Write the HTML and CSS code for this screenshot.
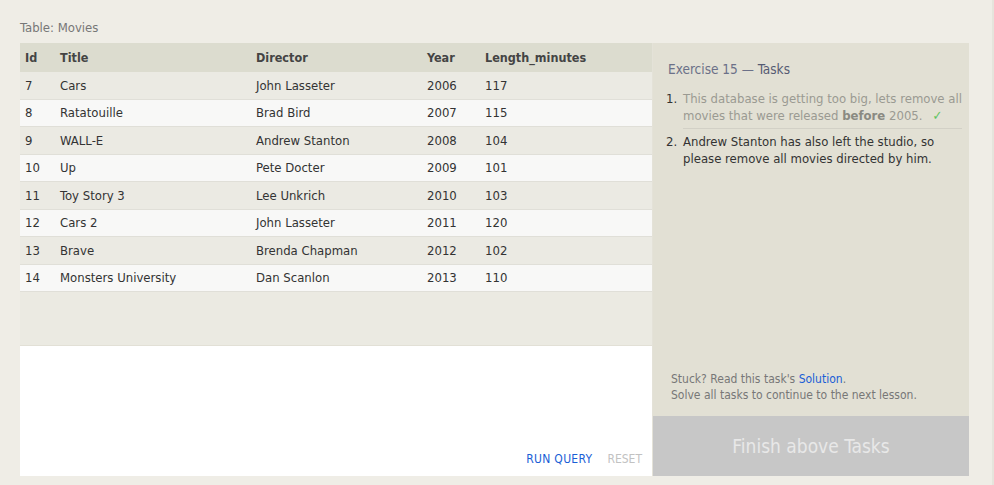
FILE: index.html
```html
<!DOCTYPE html>
<html>
<head>
<meta charset="utf-8">
<link rel="stylesheet" href="styles.css">
</head>
<body>
<div class="page">
  <div class="caption">Table: Movies</div>
  <div class="exercise">
    <div class="left">
      <div class="table-area">
        <table class="movies">
          <thead>
            <tr><th class="c-id">Id</th><th class="c-title">Title</th><th class="c-dir">Director</th><th class="c-year">Year</th><th>Length_minutes</th></tr>
          </thead>
          <tbody>
            <tr><td>7</td><td>Cars</td><td>John Lasseter</td><td>2006</td><td>117</td></tr>
            <tr><td>8</td><td>Ratatouille</td><td>Brad Bird</td><td>2007</td><td>115</td></tr>
            <tr><td>9</td><td>WALL-E</td><td>Andrew Stanton</td><td>2008</td><td>104</td></tr>
            <tr><td>10</td><td>Up</td><td>Pete Docter</td><td>2009</td><td>101</td></tr>
            <tr><td>11</td><td>Toy Story 3</td><td>Lee Unkrich</td><td>2010</td><td>103</td></tr>
            <tr><td>12</td><td>Cars 2</td><td>John Lasseter</td><td>2011</td><td>120</td></tr>
            <tr><td>13</td><td>Brave</td><td>Brenda Chapman</td><td>2012</td><td>102</td></tr>
            <tr><td>14</td><td>Monsters University</td><td>Dan Scanlon</td><td>2013</td><td>110</td></tr>
          </tbody>
        </table>
      </div>
      <div class="editor">
        <div class="actions">
          <span class="run">RUN QUERY</span>
          <span class="reset">RESET</span>
        </div>
      </div>
    </div>
    <div class="right">
      <div class="tasks">
        <h3 class="tasks-title">Exercise 15 — <span class="strong">Tasks</span></h3>
        <ol class="task-list">
          <li class="done"><span class="num">1.</span><span class="txt">This database is getting too big, lets remove all movies that were released <b>before</b> 2005.<span class="check">✓</span></span></li>
          <li><span class="num">2.</span><span class="txt">Andrew Stanton has also left the studio, so please remove all movies directed by him.</span></li>
        </ol>
        <div class="hint">
          <div>Stuck? Read this task's <span class="link">Solution</span>.</div>
          <div>Solve all tasks to continue to the next lesson.</div>
        </div>
      </div>
      <div class="finish">Finish above Tasks</div>
    </div>
  </div>
</div>
</body>
</html>
```

FILE: styles.css
```css
html, body {
  margin: 0;
  padding: 0;
}
body {
  background: #efede6;
  font-family: Tahoma, "DejaVu Sans Condensed", "Liberation Sans", sans-serif;
  color: #333;
  width: 994px;
  height: 485px;
  overflow: hidden;
  box-shadow: inset -2px 0 0 #e6e4dc;
}
.page {
  padding: 18px 25px 0 20px;
}
.caption {
  font-size: 13px;
  color: #777;
  height: 25px;
  line-height: 20px;
}
.exercise {
  display: flex;
  width: 949px;
  height: 433px;
}
.left {
  width: 632px;
  display: flex;
  flex-direction: column;
  border-right: 1px solid #e4e2d8;
}
.table-area {
  background: #ebeae2;
  height: 302px;
  border-bottom: 1px solid #e2e0d6;
}
.movies {
  border-collapse: collapse;
  width: 100%;
  font-size: 13px;
  color: #333;
  table-layout: fixed;
}
.movies th {
  background: #dcdccf;
  text-align: left;
  font-weight: bold;
  font-size: 12.5px;
  color: #444;
  height: 29px;
  padding: 0 0 0 5px;
  box-sizing: border-box;
}
.movies td {
  height: 26.5px;
  padding: 0 0 0 5px;
  border-bottom: 1px solid #e0dfd8;
  box-sizing: content-box;
}
.movies tbody tr:nth-child(odd) td {
  background: #ebeae3;
}
.movies tbody tr:nth-child(even) td {
  background: #f8f8f7;
}
.c-id { width: 35px; }
.c-title { width: 196px; }
.c-dir { width: 171px; }
.c-year { width: 58px; }
.editor {
  flex: 1;
  background: #fff;
  display: flex;
  flex-direction: column;
  justify-content: flex-end;
}
.actions {
  display: flex;
  justify-content: flex-end;
  gap: 15px;
  padding: 0 10px 10px 0;
  font-size: 12px;
}
.run { color: #1a5ed6; letter-spacing: 0.3px; }
.reset { color: #c2c2c2; }
.right {
  width: 316px;
  display: flex;
  flex-direction: column;
  background: #e2e0d4;
}
.tasks {
  flex: 1;
  padding: 18px 7px 0 13px;
  display: flex;
  flex-direction: column;
}
.tasks-title {
  margin: 0 0 13px 2px;
  font-size: 13.5px;
  font-weight: normal;
  color: #6b7088;
}
.tasks-title .strong {
  color: #555a72;
}
.task-list {
  list-style: none;
  margin: 0;
  padding: 0;
  font-size: 13px;
  line-height: 17px;
}
.task-list li {
  display: flex;
}
.task-list .num {
  width: 17px;
  flex: none;
  color: #333;
}
.task-list .txt {
  color: #333;
}
.task-list li.done .txt {
  color: #9a9a92;
  border-bottom: 1px solid #d2d0c6;
  padding-bottom: 4px;
  margin-bottom: 4px;
}
.task-list li.done b {
  color: #8a8a82;
}
.check {
  color: #5fc35f;
  margin-left: 10px;
}
.hint {
  margin-top: auto;
  padding: 0 0 13px 5px;
  font-size: 12px;
  line-height: 16px;
  color: #777;
}
.link { color: #1a5ed6; }
.finish {
  height: 60px;
  background: #c7c7c7;
  color: #e8e8e8;
  font-size: 19px;
  display: flex;
  align-items: center;
  justify-content: center;
}
```
